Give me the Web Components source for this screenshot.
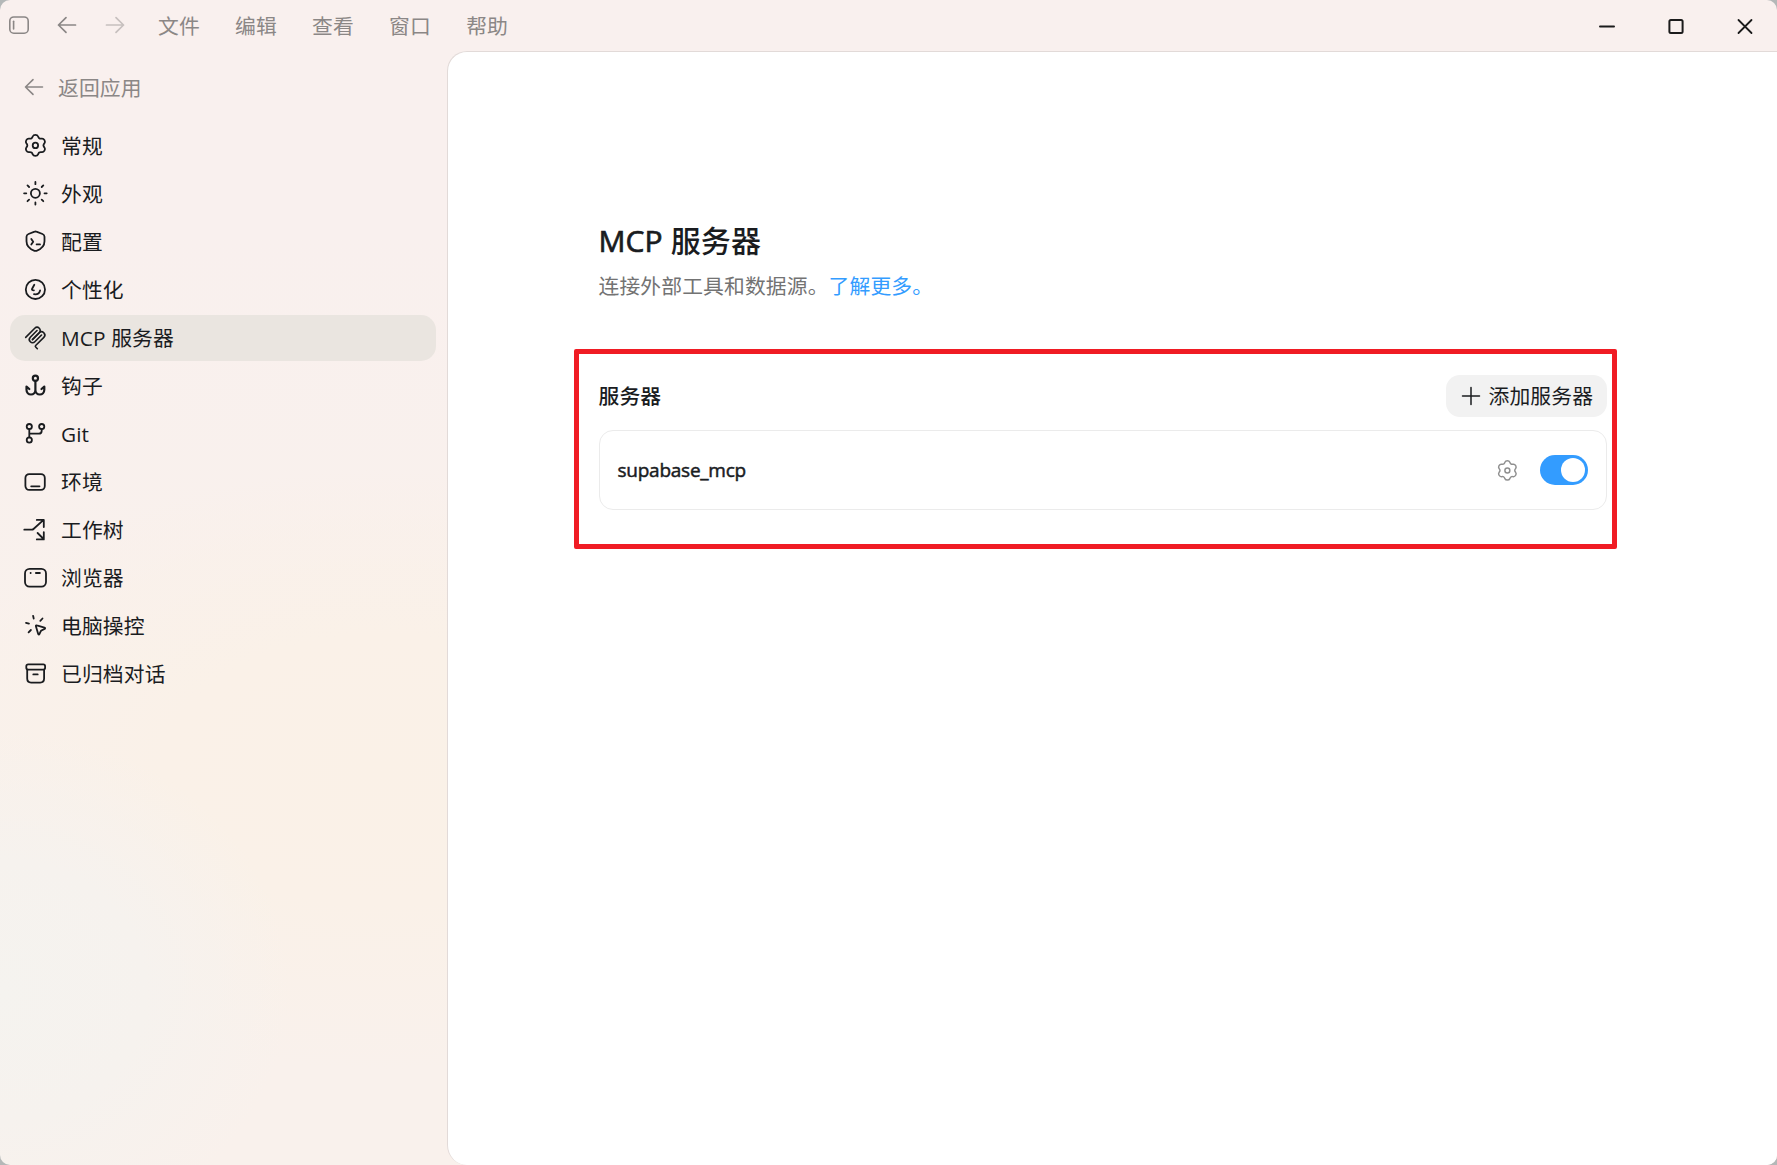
<!DOCTYPE html>
<html lang="zh-CN">
<head>
<meta charset="UTF-8">
<title>MCP 服务器</title>
<style>
    html, body {
        margin: 0;
        height: 100%;
        overflow: hidden;
        background: #b4b8b8;
    }

    body {
        --text: #1a1c1f;
        --muted: #8b8786;
        --accent: #339cff;
        font-family: "Open Sans", "Noto Sans CJK SC", sans-serif;
        font-size: 20.8px;
        letter-spacing: 0.12px;
        line-height: 28px;
        color: var(--text);
    }

    .latin {
        -webkit-text-stroke: 0.7px currentColor;
    }
</style>
</head>
<body>
<app-window>
    <title-bar slot="titlebar"></title-bar>
    <settings-sidebar slot="sidebar">
        <nav-item icon="gear">常规</nav-item>
        <nav-item icon="sun">外观</nav-item>
        <nav-item icon="shield">配置</nav-item>
        <nav-item icon="persona">个性化</nav-item>
        <nav-item icon="mcp" active>MCP 服务器</nav-item>
        <nav-item icon="anchor">钩子</nav-item>
        <nav-item icon="git">Git</nav-item>
        <nav-item icon="env">环境</nav-item>
        <nav-item icon="worktree">工作树</nav-item>
        <nav-item icon="browser">浏览器</nav-item>
        <nav-item icon="computer">电脑操控</nav-item>
        <nav-item icon="archive">已归档对话</nav-item>
    </settings-sidebar>
    <settings-page>
        <span slot="heading"><span class="latin">MCP</span> 服务器</span>
        <span slot="description">连接外部工具和数据源。</span>
        <span slot="link">了解更多。</span>
        <server-section heading="服务器">
            <server-row name="supabase_mcp"></server-row>
        </server-section>
    </settings-page>
</app-window>

<script>
    // One tooth of the gear, repeated every 60 degrees around (cx, cy)
    function gearPath(cx, cy, scale) {
        const tooth = [
            [-3.2, -7.4], [-3.1, -8.0], [-2.7, -8.9],
            [-1.8, -11], [1.8, -11], [2.7, -8.9],
            [3.1, -8.0], [3.2, -7.4], [4.05, -7.0]
        ];
        const place = ([x, y], angle) => {
            const px = cx + (x * Math.cos(angle) - y * Math.sin(angle)) * scale;
            const py = cy + (x * Math.sin(angle) + y * Math.cos(angle)) * scale;
            return `${px.toFixed(2)} ${py.toFixed(2)}`;
        };
        let d = `M${place([-4.05, -7.0], 0)}`;
        for (let i = 0; i < 6; i++) {
            const p = tooth.map(point => place(point, i * Math.PI / 3));
            d += `C${p[0]} ${p[1]} ${p[2]}C${p[3]} ${p[4]} ${p[5]}C${p[6]} ${p[7]} ${p[8]}`;
        }
        return d + 'Z';
    }

    const ICONS = {
        gear: `<path d="${gearPath(12.4, 11.4, 1)}"/><circle cx="12.4" cy="11.4" r="2.7"/>`,
        sun: `<circle cx="12.4" cy="11.3" r="4.5"/>
            <path d="M12.4 0v2.2M12.4 20.4v2.2M1.1 11.3h2.2M21.5 11.3h2.2M4.5 3.4l1.6 1.6M18.7 17.6l1.6 1.6M20.3 3.4l-1.6 1.6M6.1 17.6l-1.6 1.6"/>`,
        shield: `<path d="M11.6 1.7q.9-.4 1.8 0l6.1 2.3c1.3.5 2 1.3 2 2.7v4.6c0 4.6-3.5 7.9-8 9.5q-1 .3-2 0c-4.5-1.6-8-4.9-8-9.5V6.7c0-1.4.7-2.2 2-2.7z"/>
            <path d="M8.3 9l1.9 2.8-1.9 2.8M13.6 14.4h3.4"/>`,
        persona: `<circle cx="12.4" cy="11.4" r="9.6"/>
            <path d="M11.3 6.8l-2.2 3.9c-.5.9 0 1.5 1.8 1.6M11 16.2c3 .5 5.3-.8 6.1-3.8"/>`,
        mcp: `<g transform="translate(.3 0) scale(.1333)" stroke-width="12">
            <path d="M18 84.85L85.88 16.97C95.25 7.6 110.45 7.6 119.82 16.97C129.2 26.34 129.2 41.54 119.82 50.91L68.56 102.18"/>
            <path d="M69.27 101.47L119.82 50.91C129.2 41.54 144.39 41.54 153.77 50.91L154.12 51.27C163.49 60.64 163.49 75.83 154.12 85.21L92.72 146.6C89.6 149.72 89.6 154.79 92.72 157.91L105.33 170.52"/>
            <path d="M102.85 33.94L52.65 84.15C43.28 93.52 43.28 108.71 52.65 118.09C62.02 127.46 77.22 127.46 86.59 118.09L136.79 67.88"/></g>`,
        anchor: `<g stroke-width="2.2"><circle cx="12.4" cy="4.2" r="2.6"/>
            <path d="M12.4 6.8v9.2c0 2.6-1.9 4.5-4.4 4.5s-4.5-2-4.5-4.7v-3.2l2.8 2.4M12.4 16c0 2.6 1.9 4.5 4.4 4.5s4.5-2 4.5-4.7v-3.2l-2.8 2.4"/></g>`,
        git: `<circle cx="6.3" cy="4.6" r="2.6"/><circle cx="18.7" cy="4.6" r="2.6"/><circle cx="6.3" cy="18" r="2.6"/>
            <path d="M6.3 7.2v8.2M18.7 7.2v1.5c0 2-1 3-3 3H6.3"/>`,
        env: `<rect x="2.4" y="4.1" width="19.4" height="15.8" rx="3.8"/><path d="M8.2 16.3h8.3"/>`,
        worktree: `<path d="M1.3 11.7h7.6q.9 0 1.6-.7l9.8-8.8M13.8 1.9h7v7.2M14.6 15l6 6M13.8 21.4h7v-7.2"/>`,
        browser: `<rect x="2" y="2.8" width="21" height="17.8" rx="4.6"/><path d="M7.6 7h.1M12.9 7h4"/>`,
        computer: `<path d="M12.9 12.3c-.2-.7.3-1.1.9-.9l7.7 2.3c.8.3.8 1 .1 1.3l-3 1.3q-.5.2-.8.8l-1.4 3c-.3.7-1 .6-1.2-.1z"/>
            <path d="M10.1 1.8l.6 2.7M19.5 4.5l-2.2 2.3M3 8.8l3 .8M7.9 16l-2.3 2.3"/>`,
        archive: `<rect x="3.3" y="2.4" width="18.8" height="5.2" rx="1.8"/>
            <path d="M4.2 7.6v9c0 2.5 1.4 4 3.9 4h9.1c2.5 0 3.9-1.5 3.9-4v-9M10.3 12.4h4.4"/>`,
        sidebar: `<rect x="2.8" y="4" width="18.4" height="16.2" rx="4"/><path d="M6.6 8.3v7.6"/>`,
        left: `<path d="M20.5 12H3.5M11 4.6L3.5 12l7.5 7.4"/>`,
        right: `<path d="M3.5 12h17M13 4.6l7.5 7.4-7.5 7.4"/>`,
        plus: `<path d="M12 3.5v17M3.5 12h17"/>`,
        minimize: `<path d="M5 12.5h14"/>`,
        maximize: `<rect x="5.4" y="5.9" width="13.2" height="13.2" rx="1.5"/>`,
        close: `<path d="M5.5 6l13 13M18.5 6L5.5 19"/>`
    };

    class UiIcon extends HTMLElement {
        constructor() {
            super();
            this.attachShadow({ mode: 'open' });
        }

        connectedCallback() {
            this.shadowRoot.innerHTML = `
                <style>
                    :host {
                        display: block;
                        flex: none;
                        width: 24px;
                        height: 24px;
                    }

                    svg {
                        display: block;
                        width: 100%;
                        height: 100%;
                        overflow: visible;
                        fill: none;
                        stroke: currentColor;
                        stroke-linecap: round;
                        stroke-linejoin: round;
                    }
                </style>
                <svg viewBox="0 0 24 24" stroke-width="${this.getAttribute('weight') || 1.6}">${ICONS[this.getAttribute('name')]}</svg>
            `;
        }
    }

    class AppWindow extends HTMLElement {
        constructor() {
            super();
            this.attachShadow({ mode: 'open' });
            this.shadowRoot.innerHTML = `
                <style>
                    :host {
                        display: grid;
                        grid-template: 51px 1fr / 447px 1fr;
                        height: 100vh;
                        border-radius: 10px;
                        overflow: hidden;
                        background:
                            radial-gradient(ellipse 290px 260px at 0px 990px, #f5f3ef 0%, #f6f2ee 50%, #f6f2ee00 100%),
                            radial-gradient(ellipse 480px 300px at 380px 770px, #faf1e7 0%, #faf1e8 45%, #faf1e800 100%),
                            linear-gradient(#f9f0ee 20%, #f9f1ec 60%);
                    }

                    .titlebar {
                        grid-column: 1 / 3;
                    }

                    .panel {
                        border: 1px solid #e2dad8;
                        border-right: 0;
                        border-bottom: 0;
                        border-radius: 20px 0 0 20px;
                        background: white;
                    }
                </style>
                <div class="titlebar"><slot name="titlebar"></slot></div>
                <slot name="sidebar"></slot>
                <div class="panel"><slot></slot></div>
            `;
        }
    }

    class TitleBar extends HTMLElement {
        constructor() {
            super();
            this.attachShadow({ mode: 'open' });
        }

        connectedCallback() {
            const menus = ['文件', '编辑', '查看', '窗口', '帮助'];
            this.shadowRoot.innerHTML = `
                <style>
                    :host {
                        display: flex;
                        justify-content: space-between;
                        height: 51px;
                        color: var(--muted);
                    }

                    .tools, .menus, .controls {
                        display: flex;
                        align-items: center;
                    }

                    .tools {
                        gap: 24px;
                        padding-left: 7px;
                        height: 50px;
                    }

                    .disabled {
                        opacity: 0.45;
                    }

                    .menus {
                        gap: 35.2px;
                        padding: 2px 0 0 7px;
                    }

                    .controls {
                        gap: 45px;
                        padding-right: 20.5px;
                        height: 51px;
                        color: #1b1b1b;
                    }
                </style>
                <div class="tools">
                    <ui-icon name="sidebar"></ui-icon>
                    <ui-icon name="left" weight="1.7"></ui-icon>
                    <ui-icon class="disabled" name="right" weight="1.7"></ui-icon>
                    <div class="menus">${menus.map(menu => `<span>${menu}</span>`).join('')}</div>
                </div>
                <div class="controls">
                    <ui-icon name="minimize" weight="2"></ui-icon>
                    <ui-icon name="maximize" weight="2"></ui-icon>
                    <ui-icon name="close" weight="1.8"></ui-icon>
                </div>
            `;
        }
    }

    class SettingsSidebar extends HTMLElement {
        constructor() {
            super();
            this.attachShadow({ mode: 'open' });
            this.shadowRoot.innerHTML = `
                <style>
                    :host {
                        display: block;
                        padding: 13px 11px 0 10px;
                    }

                    .back {
                        display: flex;
                        align-items: center;
                        gap: 12px;
                        height: 46px;
                        padding-left: 12px;
                        margin-bottom: 13px;
                        color: var(--muted);
                    }

                    .back span {
                        padding-top: 2px;
                    }

                    nav {
                        display: flex;
                        flex-direction: column;
                        gap: 2px;
                    }
                </style>
                <div class="back"><ui-icon name="left"></ui-icon><span>返回应用</span></div>
                <nav><slot></slot></nav>
            `;
        }
    }

    class NavItem extends HTMLElement {
        constructor() {
            super();
            this.attachShadow({ mode: 'open' });
        }

        connectedCallback() {
            this.shadowRoot.innerHTML = `
                <style>
                    :host {
                        display: flex;
                        align-items: center;
                        gap: 14px;
                        height: 46px;
                        padding-left: 13px;
                        border-radius: 15px;
                    }

                    :host([active]) {
                        background: #eae5e0;
                    }
                </style>
                <ui-icon name="${this.getAttribute('icon')}" weight="1.8"></ui-icon>
                <span><slot></slot></span>
            `;
        }
    }

    class SettingsPage extends HTMLElement {
        constructor() {
            super();
            this.attachShadow({ mode: 'open' });
            this.shadowRoot.innerHTML = `
                <style>
                    :host {
                        display: block;
                        width: 1008px;
                        padding: 169px 0 0 151px;
                    }

                    h1 {
                        margin: 0 0 0 -0.5px;
                        font-size: 30px;
                        line-height: 40px;
                        font-weight: 500;
                    }

                    p {
                        margin: 11px 0 75px -0.5px;
                        color: #737373;
                    }

                    .link {
                        color: var(--accent);
                    }
                </style>
                <h1><slot name="heading"></slot></h1>
                <p><slot name="description"></slot><span class="link"><slot name="link"></slot></span></p>
                <slot></slot>
            `;
        }
    }

    class ServerSection extends HTMLElement {
        constructor() {
            super();
            this.attachShadow({ mode: 'open' });
        }

        connectedCallback() {
            this.shadowRoot.innerHTML = `
                <style>
                    :host {
                        display: block;
                        position: relative;
                    }

                    header {
                        display: flex;
                        align-items: center;
                        justify-content: space-between;
                        margin-bottom: 13px;
                    }

                    h2 {
                        margin: 0 0 0 -0.5px;
                        font-size: inherit;
                        font-weight: 500;
                    }

                    .add {
                        display: flex;
                        align-items: center;
                        gap: 5.5px;
                        box-sizing: border-box;
                        width: 161px;
                        height: 42px;
                        padding-left: 13px;
                        border-radius: 14px;
                        background: #f2f2f2;
                        white-space: nowrap;
                    }

                    /* red frame around the whole section */
                    .frame {
                        position: absolute;
                        inset: -26px -10px -39px -25px;
                        border: 5px solid #f01c24;
                        border-radius: 2px;
                        pointer-events: none;
                    }
                </style>
                <header>
                    <h2>${this.getAttribute('heading')}</h2>
                    <div class="add"><ui-icon name="plus" weight="1.5"></ui-icon><span>添加服务器</span></div>
                </header>
                <slot></slot>
                <div class="frame"></div>
            `;
        }
    }

    class ServerRow extends HTMLElement {
        constructor() {
            super();
            this.attachShadow({ mode: 'open' });
        }

        connectedCallback() {
            this.shadowRoot.innerHTML = `
                <style>
                    :host {
                        display: flex;
                        align-items: center;
                        box-sizing: border-box;
                        height: 80px;
                        padding: 0 18px 0 17.5px;
                        border: 1px solid #ebebeb;
                        border-radius: 14px;
                    }

                    .name {
                        flex: 1;
                        font-size: 19px;
                        font-weight: 500;
                        letter-spacing: -0.25px;
                        -webkit-text-stroke: 0.5px currentColor;
                    }

                    ui-icon {
                        width: 22px;
                        height: 22px;
                        margin: 1px 22.5px 0 0;
                        color: #8f8f8f;
                    }

                    .toggle {
                        display: flex;
                        justify-content: flex-end;
                        box-sizing: border-box;
                        width: 48px;
                        height: 30px;
                        padding: 3px;
                        border-radius: 15px;
                        background: var(--accent);
                    }

                    .knob {
                        width: 24px;
                        height: 24px;
                        border-radius: 50%;
                        background: white;
                    }
                </style>
                <span class="name">${this.getAttribute('name')}</span>
                <ui-icon name="gear"></ui-icon>
                <div class="toggle"><div class="knob"></div></div>
            `;
        }
    }

    customElements.define('ui-icon', UiIcon);
    customElements.define('app-window', AppWindow);
    customElements.define('title-bar', TitleBar);
    customElements.define('settings-sidebar', SettingsSidebar);
    customElements.define('nav-item', NavItem);
    customElements.define('settings-page', SettingsPage);
    customElements.define('server-section', ServerSection);
    customElements.define('server-row', ServerRow);
</script>
</body>
</html>
